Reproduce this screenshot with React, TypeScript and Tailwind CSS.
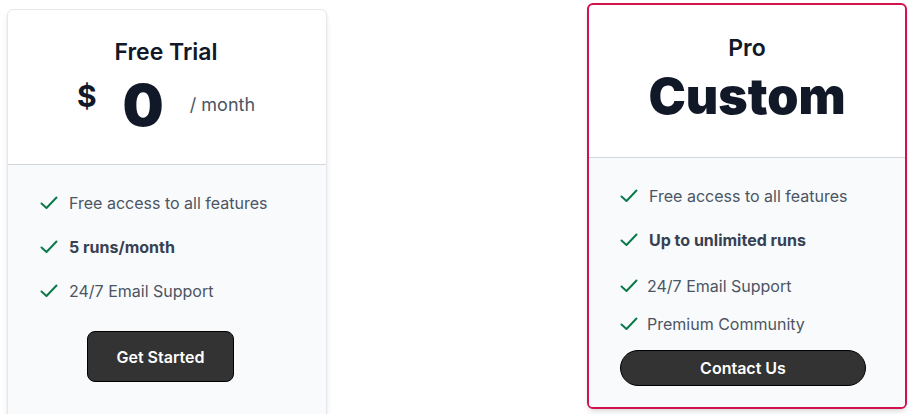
import React from "react";

const Check = () => (
  <svg width="18" height="14" viewBox="0 0 18 14" fill="none" className="shrink-0">
    <path d="M1.5 7.5 L6.5 12 L16.5 1.5" stroke="#0b7a4b" strokeWidth="2" strokeLinecap="round" strokeLinejoin="round" />
  </svg>
);

function Feature({ text, bold, gap = 12, mt = 0 }: { text: string; bold?: boolean; gap?: number; mt?: number }) {
  return (
    <li className="flex items-center h-[24px]" style={{ marginTop: mt }}>
      <Check />
      <span
        className={`text-[16px] leading-[24px] text-[#4b5563] ${bold ? "font-bold text-[#374151]" : "font-normal"}`}
        style={{ marginLeft: gap }}
      >
        {text}
      </span>
    </li>
  );
}

export default function App() {
  return (
    <div className="w-[908px] h-[414px] bg-white overflow-hidden flex items-start" style={{ fontFamily: "Inter, 'Noto Sans', sans-serif" }}>
      {/* Free Trial card */}
      <div className="ml-[7px] mt-[9px] w-[320px] h-[420px] shrink-0 rounded-md border border-gray-200 bg-white shadow-md overflow-hidden flex flex-col">
        <div className="h-[155px] flex flex-col items-center pt-[28px] border-b border-gray-300">
          <h3 className="text-[23px] leading-[28px] font-semibold text-[#111827] ml-[-2px]">Free Trial</h3>
          <div className="mt-[10px] flex items-start text-[#111827] ml-[-2px]">
            <span className="text-[30px] leading-[36px] font-bold mt-[2px]">$</span>
            <span className="text-[58px] leading-[60px] font-black ml-[26px] mt-[-1px]">0</span>
            <span className="text-[18px] leading-[24px] text-[#4b5563] ml-[26px] mt-[17px]">/ month</span>
          </div>
        </div>
        <div className="flex-1 bg-gray-50 px-[32px] pt-[26px]">
          <ul className="flex flex-col">
            <Feature text="Free access to all features" gap={11} />
            <Feature text="5 runs/month" bold gap={11} mt={20} />
            <Feature text="24/7 Email Support" gap={11} mt={20} />
          </ul>
          <div className="flex mt-[28px] ml-[47px]">
            <button className="w-[147px] h-[51px] rounded-lg bg-[#333333] border border-black text-white text-[16px] font-semibold">
              Get Started
            </button>
          </div>
        </div>
      </div>

      {/* Pro card */}
      <div className="ml-[260px] mt-[3px] w-[320px] h-[406px] shrink-0 rounded-md border-2 border-[#d1124c] bg-white shadow-md overflow-hidden flex flex-col">
        <div className="h-[153px] flex flex-col items-center pt-[29px] border-b border-gray-300">
          <h3 className="text-[23px] leading-[28px] font-semibold text-[#111827]">Pro</h3>
          <div className="mt-[6px] text-[50px] leading-[56px] font-black text-[#111827]">Custom</div>
        </div>
        <div className="flex-1 bg-gray-50 px-[31px] pt-[26px]">
          <ul className="flex flex-col">
            <Feature text="Free access to all features" gap={11} />
            <Feature text="Up to unlimited runs" bold gap={11} mt={20} />
            <Feature text="24/7 Email Support" gap={9} mt={22} />
            <Feature text="Premium Community" gap={9} mt={14} />
          </ul>
          <div className="mt-[14px]">
            <button className="w-[246px] h-[36px] rounded-full bg-[#333333] border border-black text-white text-[16px] font-semibold">
              Contact Us
            </button>
          </div>
        </div>
      </div>
    </div>
  );
}
